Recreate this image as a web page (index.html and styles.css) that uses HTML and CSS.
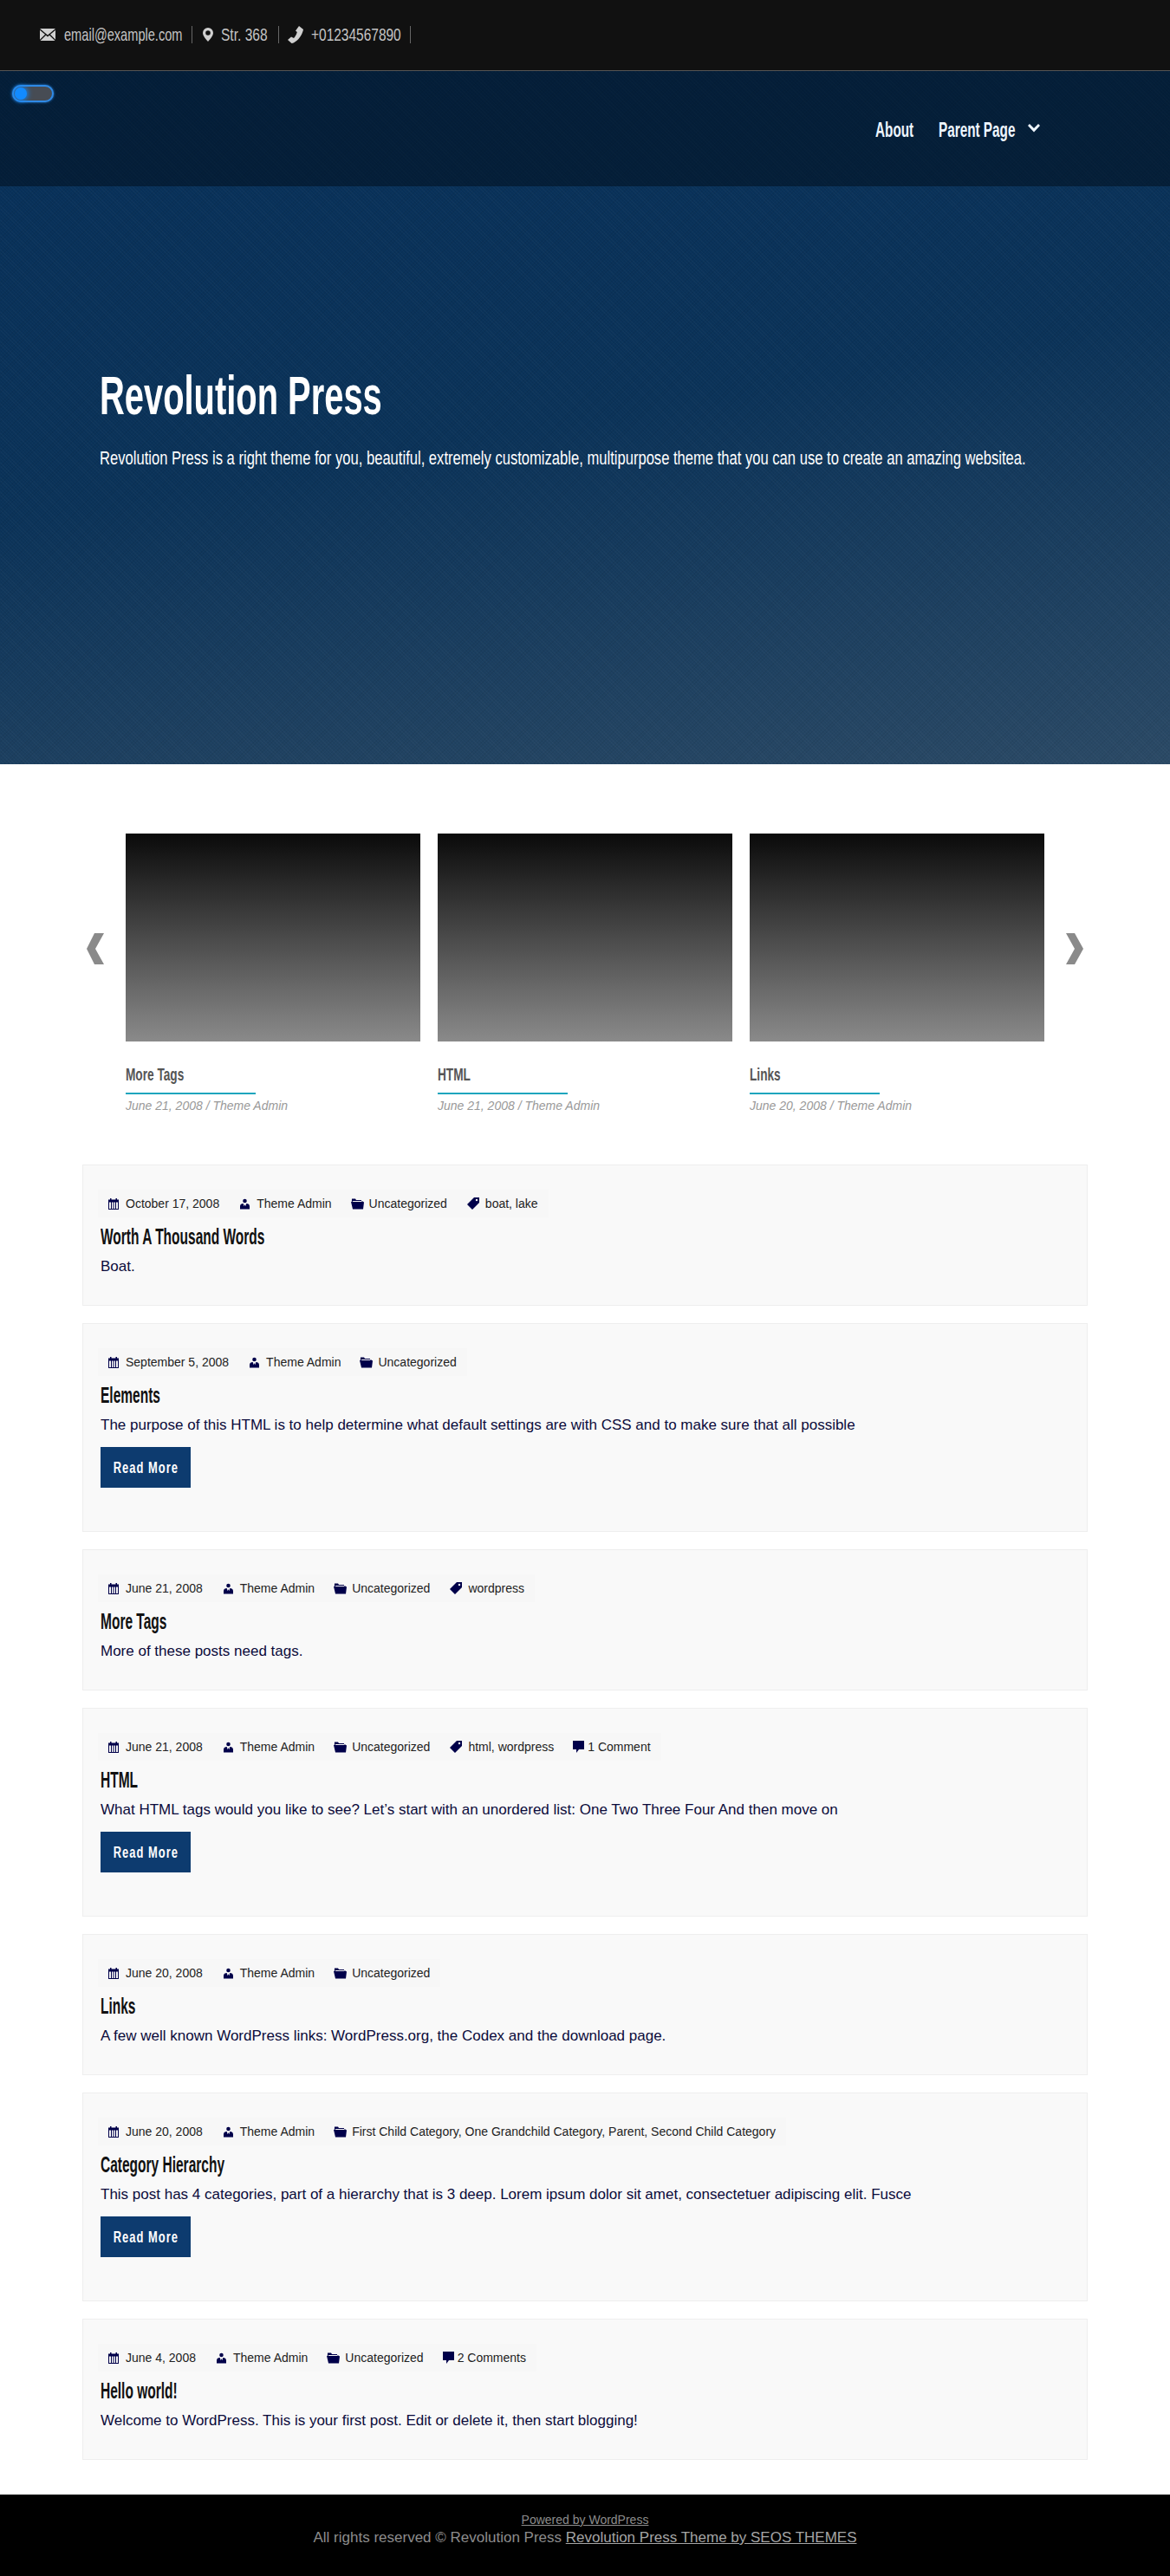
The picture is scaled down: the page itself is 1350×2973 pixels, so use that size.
FILE: index.html
```html
<!DOCTYPE html>
<html lang="en">
<head>
  <meta charset="UTF-8" />
  <title>Revolution Press</title>
  <meta name="viewport" content="width=device-width, initial-scale=1.0" />
  <link rel="stylesheet" href="styles.css">
</head>
<body>
  <svg class="sprites" width="0" height="0" aria-hidden="true">
    <symbol id="i-mail" viewBox="0 0 18 14"><path d="M0 0h18L9 7.500zM0 1.800v11l6-6zM18 1.800v11l-6-6zM7 7.700l2 1.700 2-1.700 6.500 6.300H.5z"/></symbol>
    <symbol id="i-pin" viewBox="0 0 12 16"><path fill-rule="evenodd" d="M6 0a6 6 0 0 1 6 6c0 3.500-4 7.500-6 10C4 13.500 0 9.500 0 6a6 6 0 0 1 6-6zm0 3.200a2.800 2.800 0 1 0 0 5.600 2.800 2.800 0 0 0 0-5.600z"/></symbol>
    <symbol id="i-phone" viewBox="0 0 18 20"><path d="M13 0l5 4-.5 2c-1.500 5-5 10-10 13-1 .7-2 1-3 1L0 16l4-3.500 3 1.500c1.500-1.500 3-4 3.800-7L9 5.500z"/></symbol>
    <symbol id="i-cal" viewBox="0 0 12 13"><path fill-rule="evenodd" d="M2 0h1.500v1.500h5V0H10v1.500h2V13H0V1.500h2zM1 4.500V12h2V4.500zm3 0V12h1.500V4.500zm2.500 0V12H8V4.500zm2.500 0V12h2V4.500z"/></symbol>
    <symbol id="i-user" viewBox="0 0 12 13"><circle cx="6" cy="2.700" r="2.500"/><path d="M0 13V9.500C0 7 2 6 4 6l1.200 3.500L6 7l.8 2.500L8 6c2 0 4 1 4 3.500V13z"/></symbol>
    <symbol id="i-folder" viewBox="0 0 15 12"><path d="M1 0h4l1 1.500h6v1H2.500L.8 4zM3 3.500h9.500V2.500L15 4l-1 8H2L0 3.500z"/></symbol>
    <symbol id="i-tag" viewBox="0 0 14 14"><path fill-rule="evenodd" d="M8 0h6v6l-8 8-6-6zm3 1.800a1.200 1.200 0 1 0 0 2.400 1.200 1.200 0 0 0 0-2.400z"/></symbol>
    <symbol id="i-comment" viewBox="0 0 13 14"><path d="M0 0h13v10H7l-3 4v-4H0z"/></symbol>
    <symbol id="i-chev" viewBox="0 0 14 10"><path d="M2 0l5 5 5-5 2 2-7 7.500L0 2z"/></symbol>
  </svg>

  <div class="topbar">
    <div class="contact c-mail"><svg class="ci ci-mail"><use href="#i-mail"/></svg><span class="cond">email@example.com</span></div>
    <div class="contact c-str"><svg class="ci ci-pin"><use href="#i-pin"/></svg><span class="cond">Str. 368</span></div>
    <div class="contact c-tel"><svg class="ci ci-phone"><use href="#i-phone"/></svg><span class="cond">+01234567890</span></div>
  </div>

  <header class="hero">
    <div class="toggle"><i></i></div>
    <nav class="nav">
      <a class="about" href="#"><span class="cond">About</span></a>
      <a class="parent" href="#"><span class="cond">Parent Page</span></a>
      <svg class="chev"><use href="#i-chev"/></svg>
    </nav>
    <div class="hero-text">
      <h1><span class="cond">Revolution Press</span></h1>
      <p><span class="cond">Revolution Press is a right theme for you, beautiful, extremely customizable, multipurpose theme that you can use to create an amazing websitea.</span></p>
    </div>
  </header>

  <section class="carousel">
    <svg class="arrow" viewBox="0 0 20 36"><path d="M9 0h11L10 18l10 18H9L0 18z"/></svg>
    <div class="slides">
      <div class="slide">
        <div class="thumb"></div>
        <h4><span class="cond">More Tags</span></h4>
        <div class="rule"></div>
        <div class="slide-meta">June 21, 2008 / Theme Admin</div>
      </div>
      <div class="slide">
        <div class="thumb"></div>
        <h4><span class="cond">HTML</span></h4>
        <div class="rule"></div>
        <div class="slide-meta">June 21, 2008 / Theme Admin</div>
      </div>
      <div class="slide">
        <div class="thumb"></div>
        <h4><span class="cond">Links</span></h4>
        <div class="rule"></div>
        <div class="slide-meta">June 20, 2008 / Theme Admin</div>
      </div>
    </div>
    <svg class="arrow" viewBox="0 0 20 36"><path d="M0 0h10l10 18-10 18H0l10-18z"/></svg>
  </section>

  <main class="posts">
    <article class="post">
      <div class="meta">
        <span><svg class="mi mi-cal"><use href="#i-cal"/></svg>October 17, 2008</span>
        <span><svg class="mi mi-user"><use href="#i-user"/></svg>Theme Admin</span>
        <span><svg class="mi mi-folder"><use href="#i-folder"/></svg>Uncategorized</span>
        <span><svg class="mi mi-tag"><use href="#i-tag"/></svg>boat, lake</span>
      </div>
      <h2><span class="cond">Worth A Thousand Words</span></h2>
      <p>Boat.</p>
    </article>

    <article class="post">
      <div class="meta">
        <span><svg class="mi mi-cal"><use href="#i-cal"/></svg>September 5, 2008</span>
        <span><svg class="mi mi-user"><use href="#i-user"/></svg>Theme Admin</span>
        <span><svg class="mi mi-folder"><use href="#i-folder"/></svg>Uncategorized</span>
      </div>
      <h2><span class="cond">Elements</span></h2>
      <p>The purpose of this HTML is to help determine what default settings are with CSS and to make sure that all possible</p>
      <a class="more" href="#"><span class="cond">Read More</span></a>
    </article>

    <article class="post">
      <div class="meta">
        <span><svg class="mi mi-cal"><use href="#i-cal"/></svg>June 21, 2008</span>
        <span><svg class="mi mi-user"><use href="#i-user"/></svg>Theme Admin</span>
        <span><svg class="mi mi-folder"><use href="#i-folder"/></svg>Uncategorized</span>
        <span><svg class="mi mi-tag"><use href="#i-tag"/></svg>wordpress</span>
      </div>
      <h2><span class="cond">More Tags</span></h2>
      <p>More of these posts need tags.</p>
    </article>

    <article class="post">
      <div class="meta">
        <span><svg class="mi mi-cal"><use href="#i-cal"/></svg>June 21, 2008</span>
        <span><svg class="mi mi-user"><use href="#i-user"/></svg>Theme Admin</span>
        <span><svg class="mi mi-folder"><use href="#i-folder"/></svg>Uncategorized</span>
        <span><svg class="mi mi-tag"><use href="#i-tag"/></svg>html, wordpress</span>
        <span><svg class="mi mi-comment"><use href="#i-comment"/></svg>1 Comment</span>
      </div>
      <h2><span class="cond">HTML</span></h2>
      <p>What HTML tags would you like to see? Let’s start with an unordered list: One Two Three Four And then move on</p>
      <a class="more" href="#"><span class="cond">Read More</span></a>
    </article>

    <article class="post">
      <div class="meta">
        <span><svg class="mi mi-cal"><use href="#i-cal"/></svg>June 20, 2008</span>
        <span><svg class="mi mi-user"><use href="#i-user"/></svg>Theme Admin</span>
        <span><svg class="mi mi-folder"><use href="#i-folder"/></svg>Uncategorized</span>
      </div>
      <h2><span class="cond">Links</span></h2>
      <p>A few well known WordPress links: WordPress.org, the Codex and the download page.</p>
    </article>

    <article class="post">
      <div class="meta">
        <span><svg class="mi mi-cal"><use href="#i-cal"/></svg>June 20, 2008</span>
        <span><svg class="mi mi-user"><use href="#i-user"/></svg>Theme Admin</span>
        <span><svg class="mi mi-folder"><use href="#i-folder"/></svg>First Child Category, One Grandchild Category, Parent, Second Child Category</span>
      </div>
      <h2><span class="cond">Category Hierarchy</span></h2>
      <p>This post has 4 categories, part of a hierarchy that is 3 deep. Lorem ipsum dolor sit amet, consectetuer adipiscing elit. Fusce</p>
      <a class="more" href="#"><span class="cond">Read More</span></a>
    </article>

    <article class="post">
      <div class="meta">
        <span><svg class="mi mi-cal"><use href="#i-cal"/></svg>June 4, 2008</span>
        <span><svg class="mi mi-user"><use href="#i-user"/></svg>Theme Admin</span>
        <span><svg class="mi mi-folder"><use href="#i-folder"/></svg>Uncategorized</span>
        <span><svg class="mi mi-comment"><use href="#i-comment"/></svg>2 Comments</span>
      </div>
      <h2><span class="cond">Hello world!</span></h2>
      <p>Welcome to WordPress. This is your first post. Edit or delete it, then start blogging!</p>
    </article>
  </main>

  <footer class="footer">
    <a class="powered" href="#">Powered by WordPress</a>
    <div class="rights">All rights reserved © Revolution Press <a href="#">Revolution Press Theme by SEOS THEMES</a></div>
  </footer>
</body>
</html>
```

FILE: styles.css
```css
body {
  margin: 0;
  background: #fff;
  font-family: 'Liberation Sans', Arial, sans-serif;
  color: #0b0b3b;
}

a {
  color: inherit;
}

.sprites {
  position: absolute;
}

/* no condensed font installed, so headings are squeezed */
.cond {
  display: inline-block;
  white-space: nowrap;
  transform-origin: left center;
}

/* top bar */
.topbar {
  height: 51px;
  padding: 30px 0 0 46px;
  background: #111;
  border-bottom: 1px solid #555;
  display: flex;
  align-items: flex-start;
  font-size: 21px;
  color: #c4c4c4;
}

.contact {
  flex: none;
  box-sizing: border-box;
  display: flex;
  align-items: center;
  height: 20px;
  border-right: 1px solid #666;
  margin-right: 10px;
}

.c-mail { width: 176px; }
.c-mail .cond { transform: scaleX(0.695); }
.c-str { width: 90px; }
.c-str .cond { transform: scaleX(0.74); }
.c-tel { width: 142px; }
.c-tel .cond { transform: scaleX(0.737); }

.ci {
  flex: none;
  fill: #d0d0d0;
  margin-right: 9px;
}

.ci-mail { width: 18px; height: 14px; margin-right: 10px; }
.ci-pin { width: 12px; height: 16px; margin-left: 2px; }
.ci-phone { width: 18px; height: 20px; }

/* hero */
.hero {
  position: relative;
  height: 800px;
  background:
    repeating-linear-gradient(45deg, rgba(255, 255, 255, 0.025) 0, rgba(255, 255, 255, 0.025) 1px, transparent 1px, transparent 3px),
    repeating-linear-gradient(-45deg, rgba(0, 0, 0, 0.05) 0, rgba(0, 0, 0, 0.05) 1px, transparent 1px, transparent 3px),
    linear-gradient(170deg, #07305a 0%, #0b3359 50%, #2b4a66 100%);
  color: #fff;
}

.toggle {
  position: absolute;
  left: 14px;
  top: 16px;
  width: 48px;
  height: 20px;
  box-sizing: border-box;
  border: 2px solid #2f8ae6;
  border-radius: 10px;
  background: #474c54;
  box-shadow: 0 0 3px #2f8ae6;
  z-index: 2;
}

.toggle i {
  position: absolute;
  left: 1px;
  top: 1px;
  width: 14px;
  height: 14px;
  border-radius: 50%;
  background: #128bff;
  box-shadow: 0 0 6px 1px #128bff;
}

.nav {
  height: 133px;
  box-sizing: border-box;
  padding: 55px 150px 0 0;
  background: rgba(0, 12, 24, 0.5);
  display: flex;
  justify-content: flex-end;
  align-items: flex-start;
  font-weight: bold;
  font-size: 23px;
}

.nav a {
  flex: none;
  color: #eef6ff;
  text-decoration: none;
}

.nav .cond { transform: scaleX(0.665); }
.about { width: 73px; }
.parent { width: 103px; }

.chev {
  flex: none;
  width: 14px;
  height: 10px;
  margin-top: 6px;
  fill: #eef6ff;
}

.hero-text {
  padding: 206px 0 0 115px;
}

.hero-text h1 {
  margin: 0;
  font-weight: bold;
  font-size: 63px;
  line-height: 70px;
}

.hero-text h1 .cond { transform: scaleX(0.633); }

.hero-text p {
  margin: 23px 0 0;
  overflow: hidden;
  font-size: 22px;
  line-height: 30px;
}

.hero-text p .cond { transform: scaleX(0.754); }

/* carousel */
.carousel {
  display: flex;
  align-items: flex-start;
  padding: 80px 100px 0;
}

.arrow {
  flex: none;
  width: 20px;
  height: 36px;
  margin-top: 115px;
  fill: #8a8a8a;
}

.slides {
  display: flex;
  gap: 20px;
  margin: 0 25px;
}

.slide {
  width: 340px;
}

.thumb {
  height: 240px;
  background: linear-gradient(#0a0a0a, #8a8a8a);
}

.slide h4 {
  margin: 26px 0 0;
  font-weight: bold;
  font-size: 21px;
  line-height: 24px;
  color: #555;
}

.slide h4 .cond { transform: scaleX(0.65); }

.rule {
  width: 150px;
  height: 2px;
  margin-top: 9px;
  background: #1ea5bd;
}

.slide-meta {
  margin-top: 5px;
  font-size: 14px;
  line-height: 16px;
  font-style: italic;
  color: #999;
}

/* posts */
.posts {
  padding: 60px 95px 0;
  display: flex;
  flex-direction: column;
  gap: 20px;
}

.post {
  background: #f9f9f9;
  border: 1px solid #eee;
  padding: 28px 20px 32px;
}

.meta {
  display: flex;
  align-items: center;
  margin-left: -3px;
  font-size: 14px;
  color: #222;
}

.meta span {
  display: flex;
  align-items: center;
  height: 32px;
  padding: 0 12px;
  background: #f7f7f7;
}

.mi {
  flex: none;
  height: 13px;
  fill: #00004a;
}

.mi-cal { width: 12px; margin-right: 8px; }
.mi-user { width: 11px; margin-right: 8px; }
.mi-folder { width: 15px; margin: 0 6px 0 -2px; }
.mi-tag { width: 14px; margin: 0 7px 0 -1px; height: 14px; }
.mi-comment { width: 13px; margin: 0 4px 0 -2px; height: 14px; }

.post h2 {
  margin: 7px 0 0;
  font-weight: bold;
  font-size: 25px;
  line-height: 30px;
  color: #111;
}

.post h2 .cond { transform: scaleX(0.62); }

.post p {
  margin: 8px 0 0;
  font-size: 17px;
  line-height: 24px;
}

.more {
  display: flex;
  justify-content: center;
  width: 104px;
  height: 47px;
  margin: 13px 0 18px;
  background: #0d3b6f;
  color: #fff;
  line-height: 47px;
  text-decoration: none;
  font-weight: bold;
  font-size: 19px;
  letter-spacing: 1.5px;
}

.more .cond {
  transform: scaleX(0.68);
  transform-origin: center;
}

/* footer */
.footer {
  margin-top: 40px;
  height: 94px;
  box-sizing: border-box;
  padding-top: 21px;
  background: #000;
  color: #8c8c8c;
  text-align: center;
}

.powered {
  display: block;
  font-size: 14px;
  line-height: 16px;
}

.rights {
  margin-top: 2px;
  font-size: 17px;
  line-height: 22px;
}

.rights a {
  color: #a5a5a5;
}
```
